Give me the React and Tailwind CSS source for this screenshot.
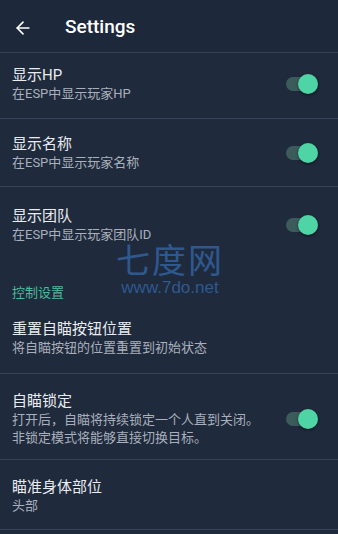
import { ArrowLeft } from "lucide-react"

function Toggle() {
  return (
    <div className="relative w-[32px] h-[20px] flex items-center shrink-0">
      <div className="w-[30px] h-[14px] rounded-full bg-[#3b5c5a]" />
      <div className="absolute right-0 w-[20px] h-[20px] rounded-full bg-[#4fd4a6] shadow-[0_1px_3px_rgba(0,0,0,0.5)]" />
    </div>
  )
}

function Row({ title, sub, toggle, pt = "pt-[12px]", pb = "pb-[15px]", border = true }) {
  return (
    <div className={`flex items-center justify-between pl-[12px] pr-[20px] ${pt} ${pb} ${border ? "border-b border-[#34435a]" : ""}`}>
      <div>
        <p className="text-[15px] leading-[20px] text-[#e9ecf0]">{title}</p>
        {sub.map((s) => (
          <p key={s} className="text-[13px] leading-[18px] text-[#a9b0bb]">{s}</p>
        ))}
      </div>
      {toggle && <Toggle />}
    </div>
  )
}

export default function App() {
  return (
    <div className="relative w-[338px] h-[534px] overflow-hidden bg-[#1f2a3d] font-['Roboto','Noto_Sans_CJK_SC',sans-serif]">
      <div className="h-[53px] pt-[3px] flex items-center border-b border-[#34435a] bg-[#1d283a]">
        <ArrowLeft className="ml-[13px] w-[20px] h-[20px] text-white" strokeWidth={2} />
        <span className="ml-[32px] text-[19px] font-medium text-white">Settings</span>
      </div>

      <Row title="显示HP" sub={["在ESP中显示玩家HP"]} toggle />
      <Row title="显示名称" sub={["在ESP中显示玩家名称"]} toggle pt="pt-[15px]" pb="pb-[14px]" />
      <Row title="显示团队" sub={["在ESP中显示玩家团队ID"]} toggle pt="pt-[19px]" pb="pb-[8px]" border={false} />

      <div className="pl-[12px] pt-[32px] text-[13px] leading-[18px] text-[#4db89a]">控制设置</div>

      <Row title="重置自瞄按钮位置" sub={["将自瞄按钮的位置重置到初始状态"]} pt="pt-[17px]" pb="pb-[16px]" />
      <Row title="自瞄锁定" sub={["打开后，自瞄将持续锁定一个人直到关闭。", "非锁定模式将能够直接切换目标。"]} toggle pt="pt-[17px]" pb="pb-[12px]" />
      <Row title="瞄准身体部位" sub={["头部"]} pt="pt-[17px]" pb="pb-[14px]" />

      <div className="absolute left-[116px] top-[240px] flex flex-col items-center opacity-60 pointer-events-none">
        <span className="text-[34px] leading-[38px] tracking-[2px] text-[#3a78c4] font-['Noto_Sans_CJK_SC',sans-serif]">七度网</span>
        <span className="text-[17px] leading-[20px] text-[#3a78c4] font-['Liberation_Sans',sans-serif]">www.7do.net</span>
      </div>
    </div>
  )
}
